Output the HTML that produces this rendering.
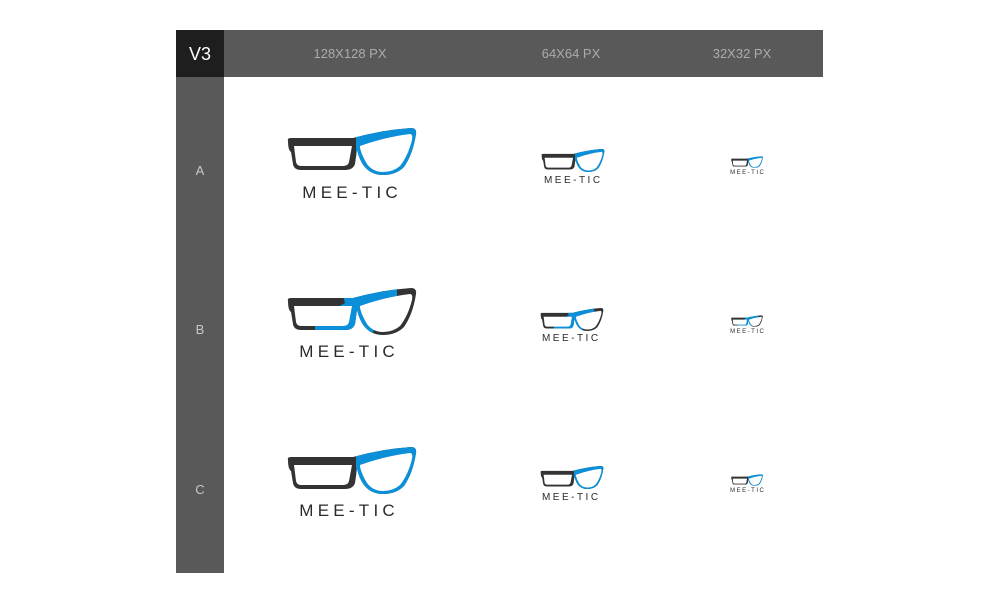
<!DOCTYPE html>
<html><head><meta charset="utf-8"><style>
html,body{margin:0;padding:0;background:#fff;width:1000px;height:603px;overflow:hidden;font-family:"Liberation Sans",sans-serif}
.abs{position:absolute}
.hdr{left:224px;top:30px;width:599px;height:47px;background:#595959}
.v3{left:176px;top:30px;width:48px;height:47px;background:#1e1e1e;color:#fff;font-size:18px;line-height:48px;text-align:center}
.col{left:176px;top:77px;width:48px;height:496px;background:#595959}
.ht{top:30px;line-height:48px;color:#ababab;font-size:13px;transform:translateX(-50%)}
.lab{left:176px;width:48px;text-align:center;color:#c8c8c8;font-size:13px}
.t{color:#2a2a2a;transform:translateX(-50%);white-space:nowrap;letter-spacing:.25em;text-indent:.25em}
</style></head><body>
<svg width="0" height="0" style="position:absolute">
<defs>
<clipPath id="frame">
<path d="M1,13 Q0,10 4,10 L70,10 Q72,11 71,15 L68,36 Q66,42 58,42 L14,42 Q7,42 6,36 L4,24 Q1,22 1,13 Z M66,10 Q95,2 124,0 Q130,0 129,6 Q126,26 117,39 Q109,47 96,47 Q84,47 77,38 Q71,30 69,16 Z"/>
</clipPath>
<g id="lenses">
<path fill="#fff" d="M7,18 L65,18 L62,34 Q61,38 56,38 L14,38 Q10,38 9,34 Z"/>
<path fill="#fff" d="M73,18 Q98,9 123,6 Q126,6 125,12 Q121,28 113,38 Q106,44 96,44 Q86,44 80,36 Q75,28 73,20 Z"/>
</g>
<symbol id="gA" viewBox="0 0 130 47">
<g clip-path="url(#frame)"><rect width="130" height="47" fill="#333"/><polygon points="68,0 130,0 130,47 72,47 69,30 69,9" fill="#0a8fd8"/></g>
<use href="#lenses"/>
</symbol>
<symbol id="gB" viewBox="0 0 130 47">
<g clip-path="url(#frame)"><rect width="130" height="47" fill="#333"/><polygon points="54,0 110,0 110,9 84,47 40,47 40,25 58,15" fill="#0a8fd8"/><polygon points="28,28 70,28 70,47 28,47" fill="#0a8fd8"/></g>
<use href="#lenses"/>
</symbol>
</defs></svg>

<div class="abs hdr"></div>
<div class="abs v3">V3</div>
<div class="abs col"></div>
<div class="abs ht" style="left:350px">128X128 PX</div>
<div class="abs ht" style="left:571px">64X64 PX</div>
<div class="abs ht" style="left:742px">32X32 PX</div>
<div class="abs lab" style="top:163px">A</div>
<div class="abs lab" style="top:322px">B</div>
<div class="abs lab" style="top:482px">C</div>

<!-- Row A -->
<svg class="abs" style="left:287px;top:128px" width="130" height="47"><use href="#gA"/></svg>
<div class="abs t" style="left:350px;top:183px;font-size:17px">MEE-TIC</div>
<svg class="abs" style="left:541px;top:149px" width="64" height="23"><use href="#gA"/></svg>
<div class="abs t" style="left:572px;top:175px;font-size:10px">MEE-TIC</div>
<svg class="abs" style="left:731px;top:156px" width="32" height="12"><use href="#gA"/></svg>
<div class="abs t" style="left:747px;top:170px;font-size:6px">MEE-TIC</div>

<!-- Row B -->
<svg class="abs" style="left:287px;top:288px" width="130" height="47"><use href="#gB"/></svg>
<div class="abs t" style="left:347px;top:342px;font-size:17px">MEE-TIC</div>
<svg class="abs" style="left:540px;top:308px" width="64" height="23"><use href="#gB"/></svg>
<div class="abs t" style="left:570px;top:333px;font-size:10px">MEE-TIC</div>
<svg class="abs" style="left:731px;top:315px" width="32" height="12"><use href="#gB"/></svg>
<div class="abs t" style="left:747px;top:329px;font-size:6px">MEE-TIC</div>

<!-- Row C -->
<svg class="abs" style="left:287px;top:447px" width="130" height="47"><use href="#gA"/></svg>
<div class="abs t" style="left:347px;top:501px;font-size:17px">MEE-TIC</div>
<svg class="abs" style="left:540px;top:466px" width="64" height="23"><use href="#gA"/></svg>
<div class="abs t" style="left:570px;top:492px;font-size:10px">MEE-TIC</div>
<svg class="abs" style="left:731px;top:474px" width="32" height="12"><use href="#gA"/></svg>
<div class="abs t" style="left:747px;top:488px;font-size:6px">MEE-TIC</div>
</body></html>
